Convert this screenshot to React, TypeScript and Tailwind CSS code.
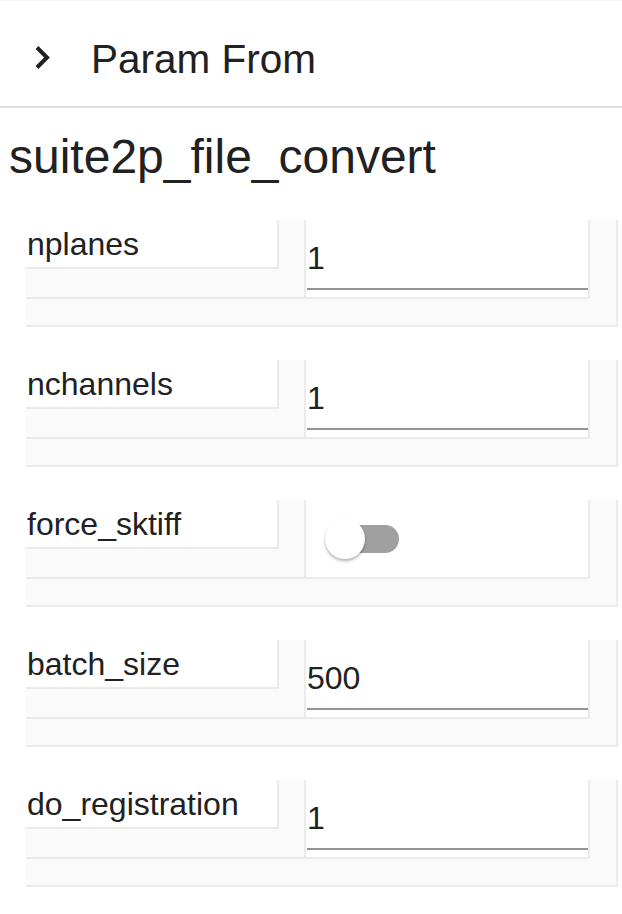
import { useState } from 'react';

type Param = { name: string; kind: 'text' | 'switch'; value: string | boolean };

const params: Param[] = [
  { name: 'nplanes', kind: 'text', value: '1' },
  { name: 'nchannels', kind: 'text', value: '1' },
  { name: 'force_sktiff', kind: 'switch', value: false },
  { name: 'batch_size', kind: 'text', value: '500' },
  { name: 'do_registration', kind: 'text', value: '1' },
];

function ParamRow({ param }: { param: Param }) {
  const [val, setVal] = useState(param.value);

  return (
    <div className="mb-[33px] h-[107px] w-[592px] border-r-2 border-b-2 border-[#ebebeb] bg-[#fafafa]">
      <div className="flex h-[79px] w-[564px] border-r-2 border-b-2 border-[#ebebeb]">
        {/* label column */}
        <div className="w-[280px] border-r-2 border-[#ebebeb]">
          <div className="h-[49px] w-[253px] border-r-2 border-b-2 border-[#ebebeb] bg-white pt-[6px] pl-[1px] leading-[36px]">
            {param.name}
          </div>
        </div>
        {/* value column */}
        <div className="flex-1 bg-white">
          {param.kind === 'switch' ? (
            <button
              type="button"
              onClick={() => setVal((v) => !v)}
              className="relative mt-[19px] ml-[19px] block h-[40px] w-[74px]"
            >
              <span className="absolute top-[6px] left-[6px] h-[28px] w-[68px] rounded-full bg-[#a0a0a0]" />
              <span
                className="absolute top-0 left-0 h-[40px] w-[40px] rounded-full bg-white shadow-[0_2px_3px_rgba(0,0,0,0.3)]"
                style={{ transform: val ? 'translateX(34px)' : 'none' }}
              />
            </button>
          ) : (
            <div className="mt-[27px] ml-[1px] border-b-2 border-[#949494]">
              <input
                value={String(val)}
                onChange={(e) => setVal(e.target.value)}
                className="block h-[41px] w-full bg-transparent pb-[18px] text-[32px] leading-[37px] text-[#212121] outline-none"
              />
            </div>
          )}
        </div>
      </div>
    </div>
  );
}

export default function App() {
  return (
    <div className="h-[914px] w-[622px] overflow-hidden border-t border-[#f3f3f3] bg-white font-['Liberation_Sans',Arial,sans-serif] text-[#212121]">
      {/* collapsed accordion header */}
      <div className="flex h-[107px] items-start border-b-2 border-[#e0e0e0]">
        <svg width="20" height="26" viewBox="0 0 20 26" className="mt-[43px] ml-[33px]">
          <polyline points="4,3.5 14,13.5 4,23.5" fill="none" stroke="#212121" strokeWidth="4" strokeLinejoin="miter" />
        </svg>
        <span className="mt-[38px] ml-[38px] text-[40.5px] leading-[40px]">Param From</span>
      </div>

      <h1 className="mt-[22px] mb-[36px] pl-[9px] text-[48px] leading-[54px] font-normal">suite2p_file_convert</h1>

      <div className="pl-[26px] text-[32px]">
        {params.map((p) => (
          <ParamRow key={p.name} param={p} />
        ))}
      </div>
    </div>
  );
}
